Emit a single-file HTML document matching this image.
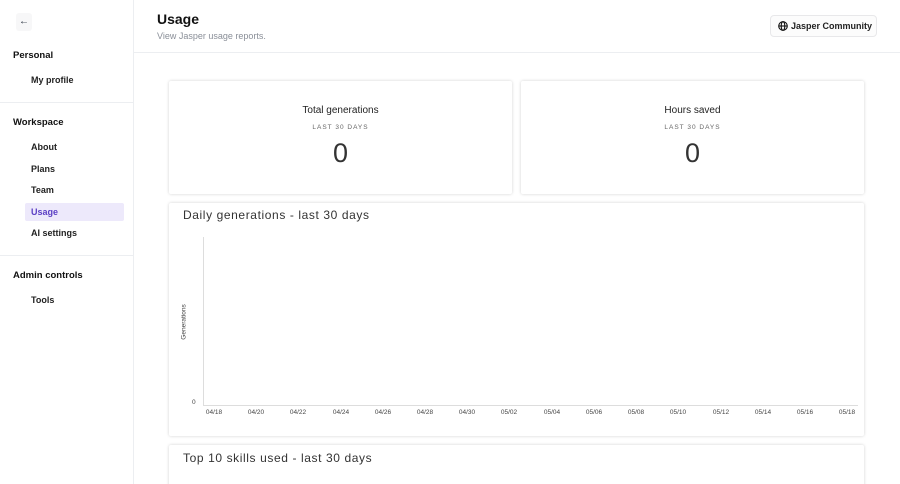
<!DOCTYPE html><html><head><style>
*{box-sizing:border-box;margin:0;padding:0}
html{width:900px;height:484px;overflow:hidden}
body{width:900px;height:484px;overflow:hidden;font-family:"Liberation Sans",sans-serif;background:#fff;color:#1f2937;position:relative}
.sb{position:absolute;left:0;top:0;width:134px;height:484px;border-right:1px solid #eceef1}
.sb .h{position:absolute;left:13px;font-size:9.5px;font-weight:bold;color:#111}
.sb .i{position:absolute;left:31px;font-size:9px;font-weight:bold;color:#222}
.sb hr{position:absolute;left:0;width:133px;border:0;border-top:1px solid #eceef1}
.card{position:absolute;background:#fff;box-shadow:0 0 3px rgba(0,0,0,.18);border-radius:2px}
.t{position:absolute;width:100%;text-align:center}
.xl{position:absolute;top:409px;font-size:6.5px;color:#444;transform:translateX(-50%)}
</style></head><body>
<div class="sb">
<div style="position:absolute;left:16px;top:13px;width:16px;height:18px;background:#f7f7f8;border-radius:3px;font-size:10px;text-align:center;line-height:18px">←</div>
<div class="h" style="top:50px">Personal</div>
<div class="i" style="top:75px">My profile</div>
<hr style="top:102px">
<div class="h" style="top:117px">Workspace</div>
<div class="i" style="top:142px">About</div>
<div class="i" style="top:164px">Plans</div>
<div class="i" style="top:185px">Team</div>
<div style="position:absolute;left:25px;top:203px;width:99px;height:18px;background:#ede9fb;border-radius:2px"></div>
<div class="i" style="top:207px;color:#5b3fc4">Usage</div>
<div class="i" style="top:228px">AI settings</div>
<hr style="top:255px">
<div class="h" style="top:270px">Admin controls</div>
<div class="i" style="top:295px">Tools</div>
</div>
<div style="position:absolute;left:134px;top:52px;width:766px;border-top:1px solid #eceef1"></div>
<div style="position:absolute;left:157px;top:11px;font-size:14px;font-weight:bold;color:#111">Usage</div>
<div style="position:absolute;left:157px;top:31px;font-size:9px;color:#8a8f98">View Jasper usage reports.</div>
<div style="position:absolute;left:770px;top:15px;width:107px;height:22px;border:1px solid #e8e8ea;border-radius:4px;background:#fcfcfc;font-size:9px;font-weight:bold;color:#222;line-height:20px;padding-left:20px">
<svg style="position:absolute;left:7px;top:5px" width="10" height="10" viewBox="0 0 10 10" fill="none" stroke="#111" stroke-width="1.1"><circle cx="5" cy="5" r="4.3"/><ellipse cx="5" cy="5" rx="1.8" ry="4.3"/><path d="M.7 5h8.6"/></svg>Jasper Community</div>
<div class="card" style="left:169px;top:81px;width:343px;height:113px">
<div class="t" style="top:24px;font-size:10px;color:#222">Total generations</div>
<div class="t" style="top:43px;font-size:6.5px;letter-spacing:1px;color:#666">LAST 30 DAYS</div>
<div class="t" style="top:57px;font-size:27px;color:#333">0</div></div>
<div class="card" style="left:521px;top:81px;width:343px;height:113px">
<div class="t" style="top:24px;font-size:10px;color:#222">Hours saved</div>
<div class="t" style="top:43px;font-size:6.5px;letter-spacing:1px;color:#666">LAST 30 DAYS</div>
<div class="t" style="top:57px;font-size:27px;color:#333">0</div></div>
<div class="card" style="left:169px;top:203px;width:695px;height:233px">
<div style="position:absolute;left:14px;top:5px;font-size:12px;letter-spacing:.6px;color:#333">Daily generations - last 30 days</div></div>
<div style="position:absolute;left:203px;top:237px;width:1px;height:169px;background:#ddd"></div>
<div style="position:absolute;left:203px;top:405px;width:655px;height:1px;background:#ddd"></div>
<div style="position:absolute;left:192px;top:399px;font-size:6.5px;color:#444">0</div>
<div style="position:absolute;left:184px;top:322px;font-size:6.5px;color:#444;transform:translate(-50%,-50%) rotate(-90deg)">Generations</div>
<div class="xl" style="left:214px">04/18</div><div class="xl" style="left:256px">04/20</div><div class="xl" style="left:298px">04/22</div><div class="xl" style="left:341px">04/24</div><div class="xl" style="left:383px">04/26</div><div class="xl" style="left:425px">04/28</div><div class="xl" style="left:467px">04/30</div><div class="xl" style="left:509px">05/02</div><div class="xl" style="left:552px">05/04</div><div class="xl" style="left:594px">05/06</div><div class="xl" style="left:636px">05/08</div><div class="xl" style="left:678px">05/10</div><div class="xl" style="left:721px">05/12</div><div class="xl" style="left:763px">05/14</div><div class="xl" style="left:805px">05/16</div><div class="xl" style="left:847px">05/18</div>
<div class="card" style="left:169px;top:445px;width:695px;height:45px">
<div style="position:absolute;left:14px;top:6px;font-size:12px;letter-spacing:.6px;color:#333">Top 10 skills used - last 30 days</div></div>
</body></html>
